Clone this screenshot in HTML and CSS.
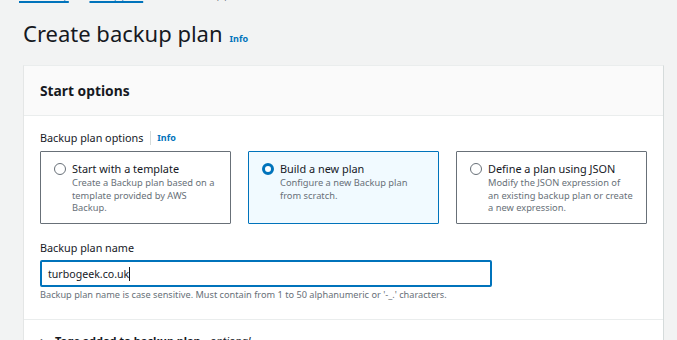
FILE: index.html
```html
<!DOCTYPE html>
<html lang="en">
<head>
    <meta charset="UTF-8">
    <title>Create backup plan</title>
    <link rel="stylesheet" href="styles.css">
</head>
<body>

    <nav class="breadcrumbs">
        <a href="#">AWS Backup</a>
        <span class="sep">&#8250;</span>
        <a href="#">Backup plans</a>
        <span class="sep">&#8250;</span>
        <span class="current">Create backup plan</span>
    </nav>

    <div class="page-title">
        <h1>Create backup plan</h1>
        <a class="info" href="#">Info</a>
    </div>

    <div class="card">
        <div class="card-header">
            <h2>Start options</h2>
        </div>

        <div class="card-body">
            <div class="field-label">
                <span>Backup plan options</span>
                <a class="info" href="#">Info</a>
            </div>

            <div class="tiles">
                <label class="tile">
                    <span class="radio"></span>
                    <span class="tile-text">
                        <span class="tile-title">Start with a template</span>
                        <span class="tile-desc">Create a Backup plan based on a<br>template provided by AWS<br>Backup.</span>
                    </span>
                </label>
                <label class="tile selected">
                    <span class="radio"></span>
                    <span class="tile-text">
                        <span class="tile-title">Build a new plan</span>
                        <span class="tile-desc">Configure a new Backup plan<br>from scratch.</span>
                    </span>
                </label>
                <label class="tile">
                    <span class="radio"></span>
                    <span class="tile-text">
                        <span class="tile-title">Define a plan using JSON</span>
                        <span class="tile-desc">Modify the JSON expression of<br>an existing backup plan or create<br>a new expression.</span>
                    </span>
                </label>
            </div>

            <div class="form-group">
                <label class="name-label" for="planName">Backup plan name</label>
                <div class="input-box">
                    <span class="value">turbogeek.co.uk</span><span class="caret"></span>
                </div>
                <div class="hint">Backup plan name is case sensitive. Must contain from 1 to 50 alphanumeric or '-_.' characters.</div>
            </div>
        </div>

        <div class="expander">
            <span class="arrow">&#9656;</span>
            <span>Tags added to backup plan - <i>optional</i></span>
        </div>
    </div>

</body>
</html>
```

FILE: styles.css
```css
/* General styling */
body {
    font-family: 'Noto Sans', 'Open Sans', sans-serif;
    margin: 0;
    padding: 0 13px 0 23px;
    background: #f2f3f3;
    color: #16191f;
    overflow: hidden;
    height: 340px;
}

a {
    color: #0073bb;
}

.breadcrumbs {
    display: flex;
    align-items: center;
    gap: 9px;
    margin: -11px 0 0 -4px;
    font-size: 8.6px;
    line-height: 14px;
    height: 14px;
}

.breadcrumbs a {
    text-decoration-thickness: 1.5px;
    text-underline-offset: 2px;
    text-decoration-skip-ink: none;
}

.breadcrumbs .sep,
.breadcrumbs .current {
    color: #687078;
}

.page-title {
    display: flex;
    align-items: baseline;
    gap: 7px;
    margin-top: 10px;
}

.page-title h1 {
    margin: 0;
    font-size: 22px;
    font-weight: 400;
    line-height: 40px;
}

.info {
    font-size: 9px;
    font-weight: 700;
    text-decoration: none;
}

.card {
    margin-top: 12px;
    background: #fff;
    border-left: 1px solid #e4e6e6;
    border-right: 1px solid #d5dbdb;
    border-top: 1px solid #eaeded;
    height: 300px;
}

.card-header {
    background: #fafafa;
    border-bottom: 1px solid #eaeded;
    height: 49px;
    display: flex;
    align-items: center;
    padding-left: 16px;
}

.card-header h2 {
    margin: 0;
    font-size: 13.8px;
    font-weight: 700;
}

.card-body {
    padding: 12px 16px 0;
    border-bottom: 1px solid #eaeded;
    height: 191px;
}

.field-label {
    display: flex;
    align-items: center;
    font-size: 10.8px;
    line-height: 20px;
}

.field-label span {
    padding-right: 7px;
    border-right: 1px solid #d5dbdb;
    line-height: 14px;
}

.field-label .info {
    margin-left: 6px;
}

.tiles {
    display: flex;
    gap: 17px;
    margin-top: 3px;
}

.tile {
    width: 191px;
    height: 73px;
    box-sizing: border-box;
    border: 1px solid #687078;
    border-radius: 1px;
    display: flex;
    padding: 9px 0 0 13px;
    gap: 6px;
}

.tile.selected {
    border-color: #0073bb;
    background: #f1faff;
}

.radio {
    width: 12px;
    height: 12px;
    box-sizing: border-box;
    border: 1px solid #687078;
    border-radius: 50%;
    margin-top: 2px;
    flex-shrink: 0;
    background: #fff;
}

.tile.selected .radio {
    border: 3.5px solid #0073bb;
}

.tile-text {
    display: flex;
    flex-direction: column;
}

.tile-title {
    font-size: 10.9px;
    line-height: 16px;
}

.tile-desc {
    font-size: 9.3px;
    line-height: 12.5px;
    color: #687078;
    white-space: nowrap;
}

.form-group {
    margin-top: 15px;
}

.name-label {
    display: block;
    font-size: 10.8px;
    line-height: 18px;
}

.input-box {
    width: 452px;
    height: 27px;
    box-sizing: border-box;
    border: 2px solid #0073bb;
    border-radius: 2px;
    margin-top: 3px;
    display: flex;
    align-items: center;
    padding-left: 6px;
    font-size: 10.6px;
}

.caret {
    width: 1px;
    height: 14px;
    background: #16191f;
}

.hint {
    font-size: 9.2px;
    color: #687078;
    margin-top: 1px;
}

.expander {
    display: flex;
    gap: 8px;
    padding: 13px 0 0 17px;
    font-size: 11px;
    font-weight: 700;
}

.expander i {
    font-weight: 400;
}
```
